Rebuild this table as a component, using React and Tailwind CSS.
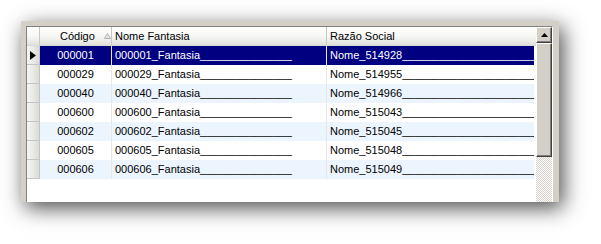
import React from 'react';

const rows = [
  { codigo: '000001', razao: 'Nome_514928' },
  { codigo: '000029', razao: 'Nome_514955' },
  { codigo: '000040', razao: 'Nome_514966' },
  { codigo: '000600', razao: 'Nome_515043' },
  { codigo: '000602', razao: 'Nome_515045' },
  { codigo: '000605', razao: 'Nome_515048' },
  { codigo: '000606', razao: 'Nome_515049' },
];

const pad = (n) => '_'.repeat(n);

// sort glyph next to the "Código" header
const SortArrow = () => (
  <svg width="7" height="6" viewBox="0 0 7 6" className="ml-[9px]">
    <polygon points="3.5,0.5 6.5,5.5 0.5,5.5" fill="#e4e4e0" stroke="#b4b4b4" strokeWidth="1" />
  </svg>
);

const RowPointer = () => (
  <svg width="6" height="9" viewBox="0 0 6 9">
    <polygon points="0,0 6,4.5 0,9" fill="#000" />
  </svg>
);

const ScrollButton = ({ children, className = '' }) => (
  <div
    className={`bg-[#d4d0c8] border-t border-l border-[#ffffff] border-r border-b border-r-[#404040] border-b-[#404040] shadow-[inset_-1px_-1px_0_#808080] ${className}`}
  >
    {children}
  </div>
);

const App = () => {
  return (
    <div className="w-[601px] h-[244px] bg-white pt-[21px] pl-[21px] font-['Liberation_Sans',Arial,sans-serif] text-[11px] text-black">
      <div className="w-[538px] h-[181px] bg-[#d4d0c8] pt-[5px] pl-[5px] pr-[6px] shadow-[4px_6px_20px_rgba(0,0,0,0.7)]">
        <div className="flex h-full border-t border-l border-[#808080] border-r border-r-white">
          {/* grid */}
          <div className="w-[509px] bg-white overflow-hidden">
            {/* header */}
            <div className="flex h-[19px] border-b border-[#d8d8d8] bg-gradient-to-b from-[#ffffff] via-[#f7f7f5] to-[#e2e2dc]">
              <div className="w-[13px] border-r border-[#c8c8c8]" />
              <div className="w-[72px] border-r border-[#c8c8c8] flex items-center pl-[20px]">
                <span>Código</span>
                <SortArrow />
              </div>
              <div className="w-[215px] border-r border-[#c8c8c8] flex items-center pl-[3px]">Nome Fantasia</div>
              <div className="w-[207px] flex items-center pl-[3px]">Razão Social</div>
            </div>

            {/* rows */}
            {rows.map((row, i) => {
              const selected = i === 0;
              const rowBg = selected ? 'bg-[#000080] text-white' : i % 2 === 0 ? 'bg-[#ecf5fe]' : 'bg-white';
              return (
                <div key={row.codigo} className="flex h-[19px]">
                  <div className="w-[13px] flex items-center justify-center border-r border-b border-[#c4c4c4] bg-gradient-to-r from-[#f6f6f4] to-[#dcdcd6]">
                    {selected && <RowPointer />}
                  </div>
                  <div className={`flex w-[494px] ${rowBg}`}>
                    <div className="w-[72px] flex items-center justify-center border-r border-[#e6e6e6]">{row.codigo}</div>
                    <div className="w-[215px] flex items-center pl-[3px] whitespace-nowrap overflow-hidden border-r border-[#e6e6e6]">
                      {row.codigo}_Fantasia{pad(15)}
                    </div>
                    <div className="w-[207px] flex items-center pl-[3px] whitespace-nowrap overflow-hidden">
                      {row.razao}
                      {pad(40)}
                    </div>
                  </div>
                </div>
              );
            })}
          </div>

          {/* vertical scrollbar */}
          <div className="w-[16px] flex flex-col">
            <ScrollButton className="h-[16px] flex items-center justify-center">
              <svg width="7" height="4" viewBox="0 0 7 4">
                <polygon points="3.5,0 7,4 0,4" fill="#000" />
              </svg>
            </ScrollButton>
            <ScrollButton className="h-[114px]" />
            <div className="flex-1 bg-[repeating-conic-gradient(#d4d0c8_0_25%,#ffffff_0_50%)] bg-[length:2px_2px]" />
          </div>
        </div>
      </div>
    </div>
  );
};

export default App;
